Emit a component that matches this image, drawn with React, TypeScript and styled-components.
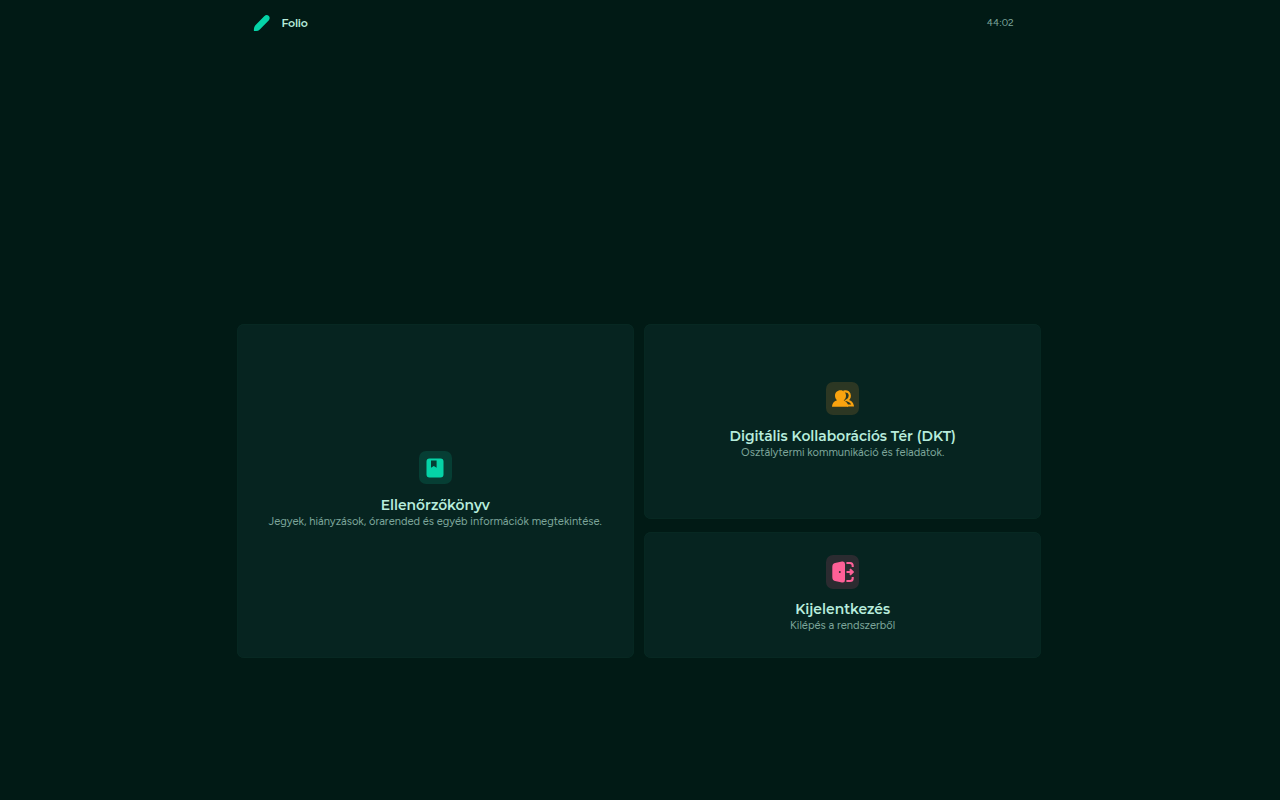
import React from 'react';
import styled, { createGlobalStyle } from 'styled-components';

const GlobalStyle = createGlobalStyle`
  * { box-sizing: border-box; }
  body {
    margin: 0;
    background: #011a15;
    font-family: Figtree, Inter, "Open Sans", sans-serif;
  }
`;

const Page = styled.div`
  width: 804.5px;
  height: 800px;
  margin-left: 236.7px;
`;

const Header = styled.header`
  display: flex;
  align-items: center;
  justify-content: space-between;
  height: 46px;
  padding: 0 27.5px 0 16.3px;
`;

const Brand = styled.div`
  display: flex;
  align-items: center;
  gap: 10.5px;
  color: #b7ecdc;
  font: 600 11px/16px Montserrat, Inter, sans-serif;
  letter-spacing: -0.25px;
`;

const Timer = styled.span`
  color: #7da69b;
  font-size: 10px;
  line-height: 14px;
`;

const Cards = styled.main`
  display: grid;
  grid-template-columns: 1fr 1fr;
  grid-template-rows: 195px 126px;
  column-gap: 10.4px;
  row-gap: 13px;
  margin-top: 278px;
`;

const Card = styled.a<{ $tall?: boolean }>`
  display: flex;
  flex-direction: column;
  align-items: center;
  justify-content: center;
  grid-row: ${(p) => (p.$tall ? 'span 2' : 'auto')};
  padding-bottom: ${(p) => (p.$tall ? 3.4 : 2.4)}px;
  border-radius: 7px;
  background: #062420;
  box-shadow: inset 0 0 0 0.7px #082a23;
`;

const IconBox = styled.div<{ $bg: string; $color: string }>`
  display: grid;
  place-items: center;
  width: 33.4px;
  height: 33.4px;
  margin-bottom: 10.4px;
  border-radius: 7px;
  background: ${(p) => p.$bg};
  color: ${(p) => p.$color};
`;

const Title = styled.h2`
  margin: 0;
  color: #b7ecdc;
  font: 600 13.88px/20px Montserrat, Inter, sans-serif;
`;

const Description = styled.p`
  margin: 0;
  color: #7da69b;
  font-size: 11.11px;
  line-height: 13px;
`;

const PencilIcon = () => (
  <svg width="18" height="18" viewBox="0 0 18 18" fill="#05d3a7">
    <path d="M.9 17.1V15Q1 12.8 2.4 11.3L11.2 2.3Q13.4.3 15.6 1.7 17.6 3.7 15.9 6.3L6.8 15.5Q5.3 17.1 3.2 17.1Z" />
  </svg>
);

const BookIcon = () => (
  <svg width="18" height="20" viewBox="0 0 18 20" fill="currentColor">
    <path fillRule="evenodd" d="M3.5.5H14.5Q17.5.5 17.5 3.5V16.5Q17.5 19.5 14.5 19.5H3.5Q.5 19.5.5 16.5V3.5Q.5.5 3.5.5ZM5 2.6V9.8L7.8 8.1 10.6 9.8V2.6Z" />
  </svg>
);

const PeopleIcon = () => (
  <svg width="22" height="17" viewBox="0 0 22 17" fill="currentColor">
    <path d="M8.5.3C11.7.3 14 2.6 14 5.7 14 7.7 13.1 9.4 11.7 10.4 14.8 11.6 16.2 14 16.2 16.7H0C0 13.7 1.6 11.4 5 10.2 3.7 9.1 3 7.6 3 5.7 3 2.6 5.3.3 8.5.3Z" />
    <path d="M11.5 1.5C15.5.6 17.8 2.8 17.8 5.7 17.8 7.6 16.9 9.1 15 10.2 18.4 11.1 20.2 12.8 20.7 15.5H15" fill="none" stroke="currentColor" strokeWidth="2.2" />
  </svg>
);

const ExitIcon = () => (
  <svg width="22" height="22" viewBox="0 0 22 22" fill="currentColor">
    <path fillRule="evenodd" d="M10 .6Q13 0 13 3V19Q13 22 10 21.4L3 20Q.3 19.3.3 16V6Q.3 2.7 3 2ZM7.8 10A1 1 0 1 0 7.8 12 1 1 0 1 0 7.8 10Z" />
    <path d="M14.4 2H18Q20.7 2 20.7 4.8V6M14.4 20H18Q20.7 20 20.7 17.2V16M14.5 11H20.5M17.9 8.2 20.7 11 17.9 13.8" fill="none" stroke="currentColor" strokeWidth="2.1" />
  </svg>
);

export default function App() {
  return (
    <>
      <GlobalStyle />
      <Page>
        <Header>
          <Brand>
            <PencilIcon />
            <span>Folio</span>
          </Brand>
          <Timer>44:02</Timer>
        </Header>
        <Cards>
          <Card $tall>
            <IconBox $bg="#063e34" $color="#05d3a7"><BookIcon /></IconBox>
            <Title>Ellenőrzőkönyv</Title>
            <Description>Jegyek, hiányzások, órarended és egyéb információk megtekintése.</Description>
          </Card>
          <Card>
            <IconBox $bg="#2c3723" $color="#faa30f"><PeopleIcon /></IconBox>
            <Title>Digitális Kollaborációs Tér (DKT)</Title>
            <Description>Osztálytermi kommunikáció és feladatok.</Description>
          </Card>
          <Card>
            <IconBox $bg="#2b2b30" $color="#fe6097"><ExitIcon /></IconBox>
            <Title>Kijelentkezés</Title>
            <Description>Kilépés a rendszerből</Description>
          </Card>
        </Cards>
      </Page>
    </>
  );
}
